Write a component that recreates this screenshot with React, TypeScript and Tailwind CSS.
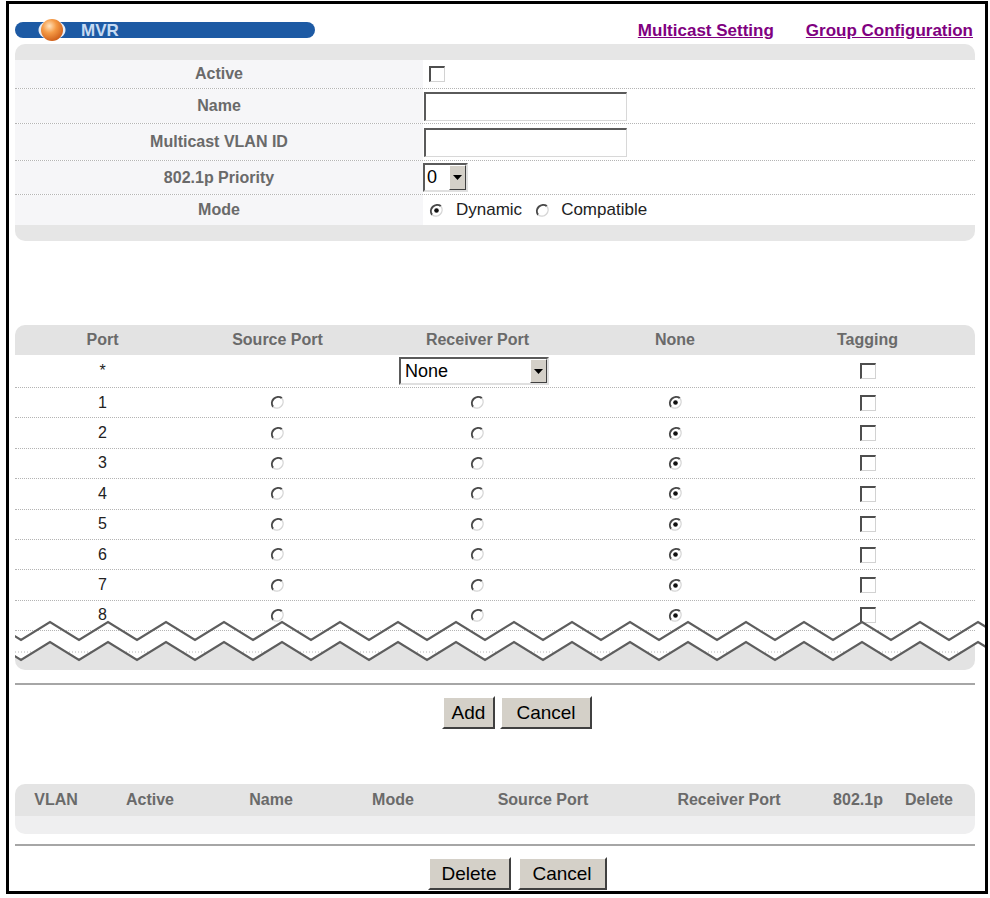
import React from "react";

const zig = (off: number) => {
  const pts: string[] = [];
  for (let x = -23; x <= 1010; x += 29) {
    const k = Math.round((x + 23) / 29);
    pts.push(`${x},${(k % 2 === 0 ? 2 : 20) + off}`);
  }
  return pts.join(" ");
};

function Radio({ checked }: { checked?: boolean }) {
  return (
    <svg width="15" height="15" viewBox="0 0 15 15">
      <circle cx="7.5" cy="7.5" r="6.3" fill="#fff" />
      <path d="M11.9 3.1 A6.3 6.3 0 0 0 3.1 11.9" fill="none" stroke="#4a4a4a" strokeWidth="2" />
      <path d="M3.1 11.9 A6.3 6.3 0 0 0 11.9 3.1" fill="none" stroke="#d6d6d6" strokeWidth="1.4" />
      {checked && <circle cx="7.5" cy="7.5" r="2.3" fill="#111" />}
    </svg>
  );
}

function Check() {
  return (
    <div className="w-[16px] h-[16px] bg-white border-t-2 border-l-2 border-b border-r border-t-[#4e4e4e] border-l-[#4e4e4e] border-b-[#d2d2d2] border-r-[#d2d2d2]" />
  );
}

function Arrow() {
  return (
    <div className="w-[17px] h-full bg-[#d4d0c8] border border-t-white border-l-white border-b-[#404040] border-r-[#404040] flex items-center justify-center">
      <svg width="9" height="5" viewBox="0 0 9 5">
        <polygon points="0,0 9,0 4.5,5" fill="#000" />
      </svg>
    </div>
  );
}

function Btn({ children, className }: { children: React.ReactNode; className: string }) {
  return (
    <button
      className={
        "h-[33px] bg-[#d4d0c8] border-2 border-t-white border-l-white border-b-[#404040] border-r-[#404040] text-[19px] text-black leading-none " +
        className
      }
    >
      {children}
    </button>
  );
}

function FormRow({ label, h, last, children }: { label: string; h: string; last?: boolean; children: React.ReactNode }) {
  return (
    <div className={`flex ${h} ${last ? "" : "border-b border-dotted border-[#b4b4b4]"}`}>
      <div className="w-[408px] bg-[#f6f6f8] flex items-center justify-center text-[16px] font-bold text-[#6a6a6a]">
        {label}
      </div>
      <div className="flex-1 bg-white flex items-center">{children}</div>
    </div>
  );
}

const ports = [1, 2, 3, 4, 5, 6, 7, 8];

export default function App() {
  return (
    <div className="w-[990px] h-[898px] bg-white font-['Liberation_Sans',Arial,sans-serif]">
      <div className="ml-[6px] mt-px w-[982px] h-[893px] border-[3px] border-black pl-[6px] pr-[10px] pt-[18px]">
        {/* title bar */}
        <div className="flex h-4 items-center justify-between">
          <div className="w-[300px] h-4 rounded-full bg-[#1d5aa4] flex items-center">
            <svg width="28" height="24" viewBox="0 0 28 24" className="ml-[23px] shrink-0">
              <defs>
                <radialGradient id="ball" cx="0.38" cy="0.32" r="0.7">
                  <stop offset="0" stopColor="#ffe2bd" />
                  <stop offset="0.45" stopColor="#f59a45" />
                  <stop offset="1" stopColor="#d0601a" />
                </radialGradient>
              </defs>
              <ellipse cx="14" cy="12" rx="13.5" ry="10" fill="#e9eef6" />
              <circle cx="14" cy="12" r="11" fill="url(#ball)" />
            </svg>
            <span className="ml-[15px] text-[17px] font-bold text-[#c6daf2] leading-none">MVR</span>
          </div>
          <div className="flex gap-[32px] pr-[2px] text-[17px] font-bold text-[#800080] underline leading-none">
            <span>Multicast Setting</span>
            <span>Group Configuration</span>
          </div>
        </div>

        {/* settings panel */}
        <div className="mt-[6px] rounded-[10px] overflow-hidden">
          <div className="h-4 bg-[#e6e6e6]" />
          <FormRow label="Active" h="h-[29px]">
            <div className="ml-[6px]">
              <Check />
            </div>
          </FormRow>
          <FormRow label="Name" h="h-[35px]">
            <input className="ml-px w-[203px] h-[29px] bg-white border-t-2 border-l-2 border-b border-r border-t-[#5a5a5a] border-l-[#5a5a5a] border-b-[#d8d8d8] border-r-[#d8d8d8] outline-none" />
          </FormRow>
          <FormRow label="Multicast VLAN ID" h="h-[37px]">
            <input className="ml-px w-[203px] h-[29px] bg-white border-t-2 border-l-2 border-b border-r border-t-[#5a5a5a] border-l-[#5a5a5a] border-b-[#d8d8d8] border-r-[#d8d8d8] outline-none" />
          </FormRow>
          <FormRow label="802.1p Priority" h="h-[34px]">
            <div className="flex w-[45px] h-[29px] bg-white border-2 border-t-[#5a5a5a] border-l-[#5a5a5a] border-b-[#e0e0e0] border-r-[#e0e0e0]">
              <span className="flex-1 pl-[2px] text-[18px] leading-[25px] text-black">0</span>
              <Arrow />
            </div>
          </FormRow>
          <FormRow label="Mode" h="h-[30px]" last>
            <div className="flex items-center ml-[6px] text-[17px] text-[#222]">
              <Radio checked />
              <span className="ml-[12px]">Dynamic</span>
              <span className="ml-[13px] flex">
                <Radio />
              </span>
              <span className="ml-[11px]">Compatible</span>
            </div>
          </FormRow>
          <div className="h-4 bg-[#e6e6e6]" />
        </div>

        {/* port table */}
        <div className="relative mt-[84px]">
          <div className="h-[30px] rounded-t-[10px] bg-[#e3e3e3] grid grid-cols-[175px_175px_225px_170px_215px] items-center text-center text-[16px] font-bold text-[#6a6a6a]">
            <span>Port</span>
            <span>Source Port</span>
            <span>Receiver Port</span>
            <span>None</span>
            <span>Tagging</span>
          </div>
          <div className="h-[33px] bg-white border-b border-dotted border-[#b4b4b4] grid grid-cols-[175px_175px_225px_170px_215px] items-center text-[16px] text-[#222]">
            <span className="text-center">*</span>
            <span />
            <div className="flex justify-center pr-[7px]">
              <div className="flex w-[150px] h-[28px] bg-white border-2 border-t-[#5a5a5a] border-l-[#5a5a5a] border-b-[#e0e0e0] border-r-[#e0e0e0]">
                <span className="flex-1 pl-[4px] text-[18px] leading-[24px] text-black">None</span>
                <Arrow />
              </div>
            </div>
            <span />
            <div className="flex justify-center">
              <Check />
            </div>
          </div>
          {ports.map((p) => (
            <div
              key={p}
              className="h-[30.4px] bg-white border-b border-dotted border-[#b4b4b4] grid grid-cols-[175px_175px_225px_170px_215px] items-center text-[16px] text-[#222]"
            >
              <span className="text-center">{p}</span>
              <div className="flex justify-center">
                <Radio />
              </div>
              <div className="flex justify-center">
                <Radio />
              </div>
              <div className="flex justify-center">
                <Radio checked />
              </div>
              <div className="flex justify-center">
                <Check />
              </div>
            </div>
          ))}
          <div className="h-[38.5px] bg-white" />
          {/* torn edge */}
          <svg width="970" height="50" viewBox="0 0 970 50" className="absolute left-0 bottom-0">
            <defs>
              <clipPath id="panelClip">
                <rect x="0" y="0" width="960" height="50" rx="10" />
              </clipPath>
            </defs>
            <line x1="0" y1="32" x2="960" y2="32" stroke="#b4b4b4" strokeDasharray="1 2" />
            <polygon points={`${zig(20)} 1010,50 -23,50`} fill="#e3e3e3" clipPath="url(#panelClip)" />
            <polyline points={zig(0)} fill="none" stroke="#5e5e5e" strokeWidth="2.2" />
            <polyline points={zig(20)} fill="none" stroke="#5e5e5e" strokeWidth="2.2" />
          </svg>
        </div>

        <div className="mt-[13px] h-[2px] bg-[#a6a6a6]" />
        <div className="mt-[11px] flex justify-center gap-[5px] pl-[44px]">
          <Btn className="w-[53px]">Add</Btn>
          <Btn className="w-[92px]">Cancel</Btn>
        </div>

        {/* summary table */}
        <div className="mt-[55px] rounded-[10px] overflow-hidden">
          <div className="h-[32px] bg-[#e4e4e4] grid grid-cols-[82px_106px_136px_108px_192px_180px_78px_64px] items-center text-center text-[16px] font-bold text-[#6a6a6a]">
            <span>VLAN</span>
            <span>Active</span>
            <span>Name</span>
            <span>Mode</span>
            <span>Source Port</span>
            <span>Receiver Port</span>
            <span>802.1p</span>
            <span>Delete</span>
          </div>
          <div className="h-[18px] bg-[#efeff0]" />
        </div>

        <div className="mt-[10px] h-[2px] bg-[#a6a6a6]" />
        <div className="mt-[11px] flex justify-center gap-[7px] pl-[44px]">
          <Btn className="w-[83px]">Delete</Btn>
          <Btn className="w-[89px]">Cancel</Btn>
        </div>
      </div>
    </div>
  );
}
